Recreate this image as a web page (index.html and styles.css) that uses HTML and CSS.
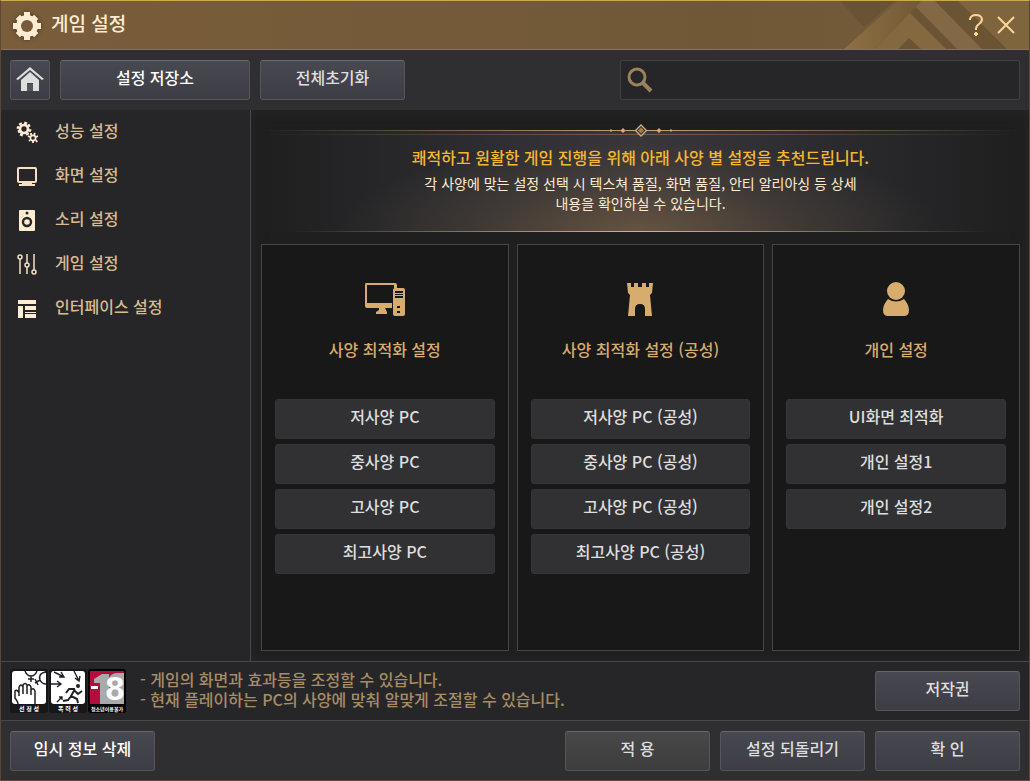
FILE: index.html
```html
<!DOCTYPE html>
<html lang="ko">
<head>
    <meta charset="UTF-8">
    <meta name="viewport" content="width=device-width, initial-scale=1.0">
    <title>게임 설정</title>
    <link rel="stylesheet" href="styles.css">
</head>
<body>
    <div class="window">
        <header class="title-bar">
            <svg class="title-pattern" width="190" height="48" viewBox="840 1 190 48" aria-hidden="true">
                <defs>
                    <linearGradient id="band" x1="0" x2="1" y1="0" y2="0">
                        <stop offset="0" stop-color="#8e7043"/>
                        <stop offset="1" stop-color="#705837"/>
                    </linearGradient>
                </defs>
                <path d="M840 0H897L865 27Z" fill="#6a5335"/>
                <path d="M897 0H1030V49H870L911 13Z" fill="#6b5434"/>
                <path d="M845 49L900 0H924L876 49Z" fill="url(#band)"/>
                <path d="M876 49L911 13L947 49Z" fill="#84683f"/>
                <path d="M899 49L910 38L922 49Z" fill="#6b5434"/>
                <path d="M917 7L923 0H935L983 49H958Z" fill="#826844"/>
                <path d="M958 0H1030V49H1008Z" fill="#7f653e"/>
            </svg>
            <svg class="title-icon" width="28" height="28" viewBox="-14 -14 28 28" aria-hidden="true">
                <g fill="#ffecd2">
                    <rect x="-3" y="-14" width="6" height="28"/>
                    <rect x="-3" y="-13" width="6" height="26" transform="rotate(45)"/>
                    <rect x="-3" y="-14" width="6" height="28" transform="rotate(90)"/>
                    <rect x="-3" y="-13" width="6" height="26" transform="rotate(135)"/>
                    <circle r="11"/>
                </g>
                <circle r="6" fill="#775c3a"/>
            </svg>
            <h1>게임 설정</h1>
            <button class="title-btn" aria-label="도움말">
                <svg width="14" height="24" viewBox="0 0 14 24" fill="none" stroke="#ffd596" stroke-width="2">
                    <path d="M1 7V6Q2 2 7 2T13 6Q13 9 10 11T7 16V17"/>
                    <path d="M7 19L9 21L7 23L5 21Z" fill="#ffd596" stroke-width="1"/>
                </svg>
            </button>
            <button class="title-btn" aria-label="닫기">
                <svg width="18" height="18" viewBox="0 0 18 18" stroke="#ffd596" stroke-width="2">
                    <path d="M1 1L17 17M17 1L1 17"/>
                </svg>
            </button>
        </header>

        <div class="toolbar">
            <button class="btn btn-home" aria-label="홈">
                <svg width="28" height="26" viewBox="0 0 28 26" fill="#dedede">
                    <path d="M14 1L28 13L26 14L14 4L2 14L0 13Z"/>
                    <path d="M14 6L23 14V25H17V17H11V25H5V14Z"/>
                    <path d="M11 18h6v7h-6Z" fill="#55555c"/>
                </svg>
            </button>
            <button class="btn btn-wide btn-white">설정 저장소</button>
            <button class="btn">전체초기화</button>
            <label class="search">
                <svg width="26" height="26" viewBox="0 0 26 26" fill="none" stroke="#9a825f" aria-hidden="true">
                    <circle cx="10" cy="10" r="8" stroke-width="3"/>
                    <path d="M16 16L24 24" stroke-width="4"/>
                </svg>
                <input type="text" aria-label="설정 검색">
            </label>
        </div>

        <div class="main">
            <nav class="sidebar">
                <a href="#">
                    <svg width="22" height="22" viewBox="0 0 22 22" aria-hidden="true">
                        <g transform="translate(8 8)" fill="none" stroke="#ffecd2">
                            <circle r="4" stroke-width="2.6"/>
                            <path stroke-width="3" d="M1-4L2-7M4-3L6-4M5 1L7 2M3 4L4 6M-2 4L-3 7M-4 2L-6 3M-5-1L-7-2M-3-4L-4-6"/>
                        </g>
                        <g transform="translate(17 17)" fill="none" stroke="#ffecd2">
                            <circle r="2.6" stroke-width="1.6"/>
                            <path stroke-width="1.8" d="M1-3L2-5M3-1L5-2M3 2L4 4M0 3V5M-3 2L-4 3M-3-1L-5-2M-2-3L-2-5"/>
                        </g>
                    </svg>
                    성능 설정
                </a>
                <a href="#">
                    <svg width="22" height="22" viewBox="0 0 22 22" aria-hidden="true">
                        <rect x="2" y="3" width="18" height="14" rx="1" fill="none" stroke="#f5dfc5" stroke-width="2"/>
                        <path d="M6 18H16V19H19V21H3V19H6Z" fill="#f5dfc5"/>
                    </svg>
                    화면 설정
                </a>
                <a href="#">
                    <svg width="22" height="22" viewBox="0 0 22 22" aria-hidden="true">
                        <rect x="3" y="1" width="16" height="21" rx="1" fill="#ffecd2"/>
                        <circle cx="11" cy="4" r="1.5" fill="#262628"/>
                        <circle cx="11" cy="13" r="4" fill="none" stroke="#262628" stroke-width="2.4"/>
                    </svg>
                    소리 설정
                </a>
                <a href="#">
                    <svg width="22" height="22" viewBox="0 0 22 22" fill="none" stroke="#f5dfc5" stroke-width="1.5" aria-hidden="true">
                        <path d="M4 6V21M11 1V10M11 14V21M18 1V17"/>
                        <circle cx="4" cy="4" r="2"/>
                        <circle cx="11" cy="12" r="2"/>
                        <circle cx="18" cy="19" r="2"/>
                    </svg>
                    게임 설정
                </a>
                <a href="#">
                    <svg width="22" height="22" viewBox="0 0 22 22" fill="#ffecd2" aria-hidden="true">
                        <path d="M2 3H20V7H2ZM2 9H7V21H2ZM9 9H20V13H9ZM9 15H20V16H9ZM9 17H20V21H9Z"/>
                    </svg>
                    인터페이스 설정
                </a>
            </nav>

            <main class="content">
                <section class="banner">
                    <svg width="64" height="13" viewBox="-32 -6.5 64 13" fill="#d3ac7d" aria-hidden="true">
                        <path d="M0-5.5L5.5 0L0 5.5L-5.5 0Z" fill="#39363a" stroke="#cbae8d" stroke-width="1.3"/>
                        <path d="M0-3L3 0L0 3L-3 0Z" fill="#ac7c3e"/>
                        <path d="M18-2.5L20.5 0L18 2.5L15.5 0ZM-18-2.5L-15.5 0L-18 2.5L-20.5 0Z"/>
                        <path d="M30-1.5L31.5 0L30 1.5L28.5 0ZM-30-1.5L-28.5 0L-30 1.5L-31.5 0Z"/>
                    </svg>
                    <h2>쾌적하고 원활한 게임 진행을 위해 아래 사양 별 설정을 추천드립니다.</h2>
                    <p>각 사양에 맞는 설정 선택 시 텍스쳐 품질, 화면 품질, 안티 알리아싱 등 상세<br>내용을 확인하실 수 있습니다.</p>
                </section>

                <div class="cards">
                    <section class="card">
                        <svg width="42" height="36" viewBox="0 0 42 36" fill="#d8ac6c" aria-hidden="true">
                            <path fill-rule="evenodd" d="M2 1H31Q33 1 33 3V6H30V3H3V21H28V26H21L23 30V32H12V30L15 28V26H3Q1 26 1 24V3Q1 1 2 1Z"/>
                            <path fill-rule="evenodd" d="M31 6H39Q41 6 41 8V32Q41 34 39 34H31Q29 34 29 32V8Q29 6 31 6ZM31 9V11H39V9ZM31 12V13H39V12ZM31 14V16H39V14ZM33 24V26H36V24ZM33 29V31H36V29Z"/>
                        </svg>
                        <h3>사양 최적화 설정</h3>
                        <div class="presets">
                            <button>저사양 PC</button>
                            <button>중사양 PC</button>
                            <button>고사양 PC</button>
                            <button>최고사양 PC</button>
                        </div>
                    </section>
                    <section class="card">
                        <svg width="42" height="36" viewBox="0 0 42 36" fill="#d8ac6c" aria-hidden="true">
                            <path d="M8 1H12V5H15V1H19V5H23V1H27V5H30V1H34L33 11L31 13L33 34H26V27Q26 22 21 22T16 27V34H9L11 13L9 11Z"/>
                        </svg>
                        <h3>사양 최적화 설정 (공성)</h3>
                        <div class="presets">
                            <button>저사양 PC (공성)</button>
                            <button>중사양 PC (공성)</button>
                            <button>고사양 PC (공성)</button>
                            <button>최고사양 PC (공성)</button>
                        </div>
                    </section>
                    <section class="card">
                        <svg width="42" height="36" viewBox="0 0 42 36" fill="#d8ac6c" aria-hidden="true">
                            <circle cx="21" cy="9" r="9"/>
                            <path d="M13 17Q21 22 29 17Q34 23 34 28Q34 34 29 34H13Q8 34 8 28Q8 23 13 17Z"/>
                        </svg>
                        <h3>개인 설정</h3>
                        <div class="presets">
                            <button>UI화면 최적화</button>
                            <button>개인 설정1</button>
                            <button>개인 설정2</button>
                        </div>
                    </section>
                </div>
            </main>
        </div>

        <div class="info-bar">
            <svg class="rating" width="116" height="44" viewBox="0 0 116 44" role="img" aria-label="선정성, 폭력성, 청소년이용불가">
                <rect width="38" height="44" rx="3" fill="#17171a"/>
                <rect x="39" width="38" height="44" rx="3" fill="#17171a"/>
                <rect x="78" width="38" height="44" rx="3" fill="#000"/>
                <rect x="2" y="2" width="34" height="33" rx="3" fill="#fff"/>
                <rect x="41" y="2" width="34" height="33" rx="3" fill="#fff"/>
                <rect x="80" y="2" width="34" height="33" fill="#b20d3d"/>
                <!-- 선정성 -->
                <g fill="none" stroke="#202024" stroke-width="1.5">
                    <path d="M15 2Q17 7 21 7T27 2M21 7V13M18 10H24"/>
                    <path d="M36 3Q28 4 30 11Q32 15 36 15M30 11L25 14M25 10L28 16"/>
                    <path d="M8 35Q8 33 5 29V22Q7 20 9 24V18Q11 14 13 18V25V16Q15 13 17 16V25V17Q19 14 21 18V26V21Q23 18 25 22V35M9 23V27"/>
                </g>
                <!-- 폭력성 -->
                <g fill="none" stroke="#202024" stroke-width="1.4">
                    <path d="M44 3L54 8M49 8L54 8L51 3M41 15H50M47 12L51 15L47 18M64 2L69 12M65 9L69 12L70 7M47 33L52 28M49 28H52V31"/>
                    <path d="M65 20L61 27L67 30L68 34M62 26L58 31L53 32M65 20L59 20L56 24M65 22L68 25L72 22" stroke-width="2"/>
                    <circle cx="68" cy="17" r="2" fill="#202024" stroke="none"/>
                </g>
                <!-- 청소년이용불가 -->
                <path d="M84 10L92 5H99V35H90V14H84Z" fill="#aaa"/>
                <path d="M99 9Q101 4 108 4H114V35H97V25Q97 21 100 19Q97 15 99 9Z" fill="#aaa"/>
                <path d="M81 17H88V20H81Z" fill="#fff"/>
                <text class="rating-num" x="105" y="31">8</text>
                <text class="rating-text" x="19" y="42">선 정 성</text>
                <text class="rating-text" x="58" y="42">폭 력 성</text>
                <text class="rating-text rating-small" x="97" y="42">청소년이용불가</text>
            </svg>
            <p>- 게임의 화면과 효과등을 조정할 수 있습니다.<br>- 현재 플레이하는 PC의 사양에 맞춰 알맞게 조절할 수 있습니다.</p>
            <button class="btn">저작권</button>
        </div>

        <footer class="footer">
            <button class="btn btn-white btn-left">임시 정보 삭제</button>
            <button class="btn btn-gray">적 용</button>
            <button class="btn">설정 되돌리기</button>
            <button class="btn">확 인</button>
        </footer>
    </div>
</body>
</html>
```

FILE: styles.css
```css
* {
    box-sizing: border-box;
}

body {
    margin: 0;
    font-family: "Noto Sans CJK KR", sans-serif;
    font-size: 16px;
    font-weight: 500;
    line-height: 20px;
    color: #dedede;
    background-color: #262628;
}

h1, h2, h3, p {
    margin: 0;
    font-weight: 500;
}

svg {
    display: block;
    flex-shrink: 0;
}

button {
    font: inherit;
    color: inherit;
    cursor: pointer;
}

.window {
    display: flex;
    flex-direction: column;
    min-height: 100vh;
    border: 1px solid #5b4637;
    border-top-color: #cba950;
}

/* Title bar */
.title-bar {
    position: relative;
    display: flex;
    align-items: center;
    height: 49px;
    padding: 0 14px 0 12px;
    background: linear-gradient(90deg, #7a5d3b, #705837 70%, #755c39);
    border-bottom: 1px solid #927346;
}

.title-pattern {
    position: absolute;
    top: 0;
    right: 0;
}

.title-icon {
    margin-top: 2px;
    filter: drop-shadow(0 0 2px rgba(50, 30, 10, 0.6));
}

.title-bar h1 {
    flex: 1;
    padding: 0 0 4px 10px;
    font-size: 19px;
    line-height: 28px;
    color: #ffecd2;
}

.title-btn {
    position: relative;
    margin-left: 14px;
    padding: 0;
    background: none;
    border: none;
}

/* Buttons */
.btn {
    width: 145px;
    height: 40px;
    padding: 0 0 6px;
    background: linear-gradient(#484851, #3d3d46);
    border: 1px solid #55555b;
    border-top-color: #68686c;
    border-radius: 3px;
}

.btn:hover {
    background: linear-gradient(#53535d, #474751);
}

.btn-home {
    display: flex;
    align-items: center;
    justify-content: center;
    width: 40px;
    padding: 0 0 2px;
}

.btn-wide {
    width: 190px;
}

.btn-white {
    color: #fff;
}

.btn-gray {
    background: linear-gradient(#484848, #3d3d3d);
}

/* Toolbar */
.toolbar {
    display: flex;
    gap: 10px;
    padding: 10px 9px;
    background-color: #2f2f31;
}

.search {
    display: flex;
    align-items: center;
    gap: 8px;
    width: 400px;
    height: 40px;
    margin-left: auto;
    padding: 0 6px;
    background-color: #262628;
    border: 1px solid #454142;
    border-radius: 3px;
}

.search input {
    flex: 1;
    min-width: 0;
    font: inherit;
    color: #dedede;
    background: none;
    border: none;
    outline: none;
}

.main {
    display: flex;
    flex: 1;
}

.sidebar {
    flex: 0 0 250px;
    background-color: #262628;
    border-right: 1px solid #48484a;
}

.sidebar a {
    display: flex;
    align-items: center;
    gap: 17px;
    height: 44px;
    padding-left: 15px;
    padding-bottom: 4px;
    color: #d9bb92;
    text-decoration: none;
}

.sidebar a svg {
    margin-top: 3px;
}

/* Content */
.content {
    display: flex;
    flex: 1;
    flex-direction: column;
    gap: 12px;
    padding: 14px 9px 10px 10px;
    background-color: #1f1f1f;
    box-shadow: inset 0 0 16px #262628;
}

.banner {
    display: flex;
    flex-direction: column;
    align-items: center;
    padding-bottom: 19px;
    text-align: center;
    background:
        linear-gradient(90deg, transparent, #cba677 50%, transparent) 0 6px / 100% 1px no-repeat,
        linear-gradient(90deg, transparent, #705d52 50%, transparent) 0 10px / 100% 1px no-repeat,
        linear-gradient(90deg, transparent 4%, #d8b27c 50%, transparent 96%) 0 100% / 100% 1px no-repeat,
        radial-gradient(ellipse 300px 90px at 50% 100%, rgba(120, 96, 66, 0.7), rgba(120, 96, 66, 0.25) 50%, rgba(120, 96, 66, 0)) 0 100% / 100% 101px no-repeat,
        linear-gradient(90deg, transparent, #2b2b2f 25%, #39363a 50%, #2b2b2f 75%, transparent) 0 100% / 100% 101px no-repeat;
}

.banner h2 {
    margin: 8px 0 4px;
    font-size: 16px;
    line-height: 24px;
    color: #f5b72f;
}

.banner p {
    font-size: 14px;
    font-weight: 400;
    color: #ffecd2;
}

.cards {
    display: grid;
    flex: 1;
    grid-template-columns: repeat(3, 1fr);
    gap: 8px;
}

.card {
    display: flex;
    flex-direction: column;
    align-items: center;
    padding: 37px 13px 20px;
    background-color: #181818;
    border: 1px solid #4c4442;
}

.card h3 {
    margin: 21px 0 40px;
    font-size: 16px;
    color: #d8ac6c;
}

.presets {
    display: flex;
    flex-direction: column;
    gap: 5px;
    width: 100%;
}

.presets button {
    height: 40px;
    padding: 0 0 6px;
    background-color: #313134;
    border: 1px solid #353538;
    border-radius: 3px;
}

.presets button:hover {
    background-color: #3d3d42;
}

/* Bottom bars */
.info-bar {
    display: flex;
    align-items: center;
    padding: 7px 9px;
    background-color: #262628;
    border-top: 1px solid #48484a;
}

.info-bar p {
    flex: 1;
    padding: 0 10px 4px 14px;
    color: #a78d66;
}

.rating-text {
    font-size: 6px;
    font-weight: bold;
    fill: #fff;
    text-anchor: middle;
}

.rating-small {
    font-size: 5px;
}

.rating-num {
    font-family: "Liberation Sans", sans-serif;
    font-size: 34px;
    font-weight: bold;
    fill: #fff;
    text-anchor: middle;
}

.footer {
    display: flex;
    gap: 10px;
    padding: 10px 9px 9px;
    background-color: #2f2f31;
    border-top: 1px solid #48484a;
}

.btn-left {
    margin-right: auto;
}
```
